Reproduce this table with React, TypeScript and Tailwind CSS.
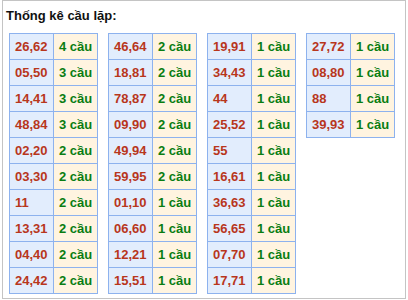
const columns: [string, string][][] = [
  [
    ["26,62", "4 cầu"],
    ["05,50", "3 cầu"],
    ["14,41", "3 cầu"],
    ["48,84", "3 cầu"],
    ["02,20", "2 cầu"],
    ["03,30", "2 cầu"],
    ["11", "2 cầu"],
    ["13,31", "2 cầu"],
    ["04,40", "2 cầu"],
    ["24,42", "2 cầu"],
  ],
  [
    ["46,64", "2 cầu"],
    ["18,81", "2 cầu"],
    ["78,87", "2 cầu"],
    ["09,90", "2 cầu"],
    ["49,94", "2 cầu"],
    ["59,95", "2 cầu"],
    ["01,10", "1 cầu"],
    ["06,60", "1 cầu"],
    ["12,21", "1 cầu"],
    ["15,51", "1 cầu"],
  ],
  [
    ["19,91", "1 cầu"],
    ["34,43", "1 cầu"],
    ["44", "1 cầu"],
    ["25,52", "1 cầu"],
    ["55", "1 cầu"],
    ["16,61", "1 cầu"],
    ["36,63", "1 cầu"],
    ["56,65", "1 cầu"],
    ["07,70", "1 cầu"],
    ["17,71", "1 cầu"],
  ],
  [
    ["27,72", "1 cầu"],
    ["08,80", "1 cầu"],
    ["88", "1 cầu"],
    ["39,93", "1 cầu"],
  ],
];

const App = () => {
  return (
    <div className="mx-[2px] h-[299px] w-[404px] border border-[#c4c4c4] bg-white px-[3px] pt-[5px] font-['Liberation_Sans',Arial,sans-serif] font-bold text-[13px]">
      <div className="h-[20px] leading-[20px] text-[#111]">Thống kê cầu lặp:</div>
      <div className="mt-[7px] ml-[3px] flex items-start gap-[10px]">
        {columns.map((rows, i) => (
          <table key={i} className="w-[89px] border-collapse">
            <tbody>
              {rows.map(([num, count]) => (
                <tr key={num} className="h-[26px]">
                  <td className="w-[44px] border border-[#8db2ee] bg-[#e2edfd] pl-[5px] p-0 text-[#b8361c]">
                    {num}
                  </td>
                  <td className="border border-[#8db2ee] bg-[#fff4e0] pl-[5px] p-0 text-[#0a7d12]">
                    {count}
                  </td>
                </tr>
              ))}
            </tbody>
          </table>
        ))}
      </div>
    </div>
  );
};

export default App;
